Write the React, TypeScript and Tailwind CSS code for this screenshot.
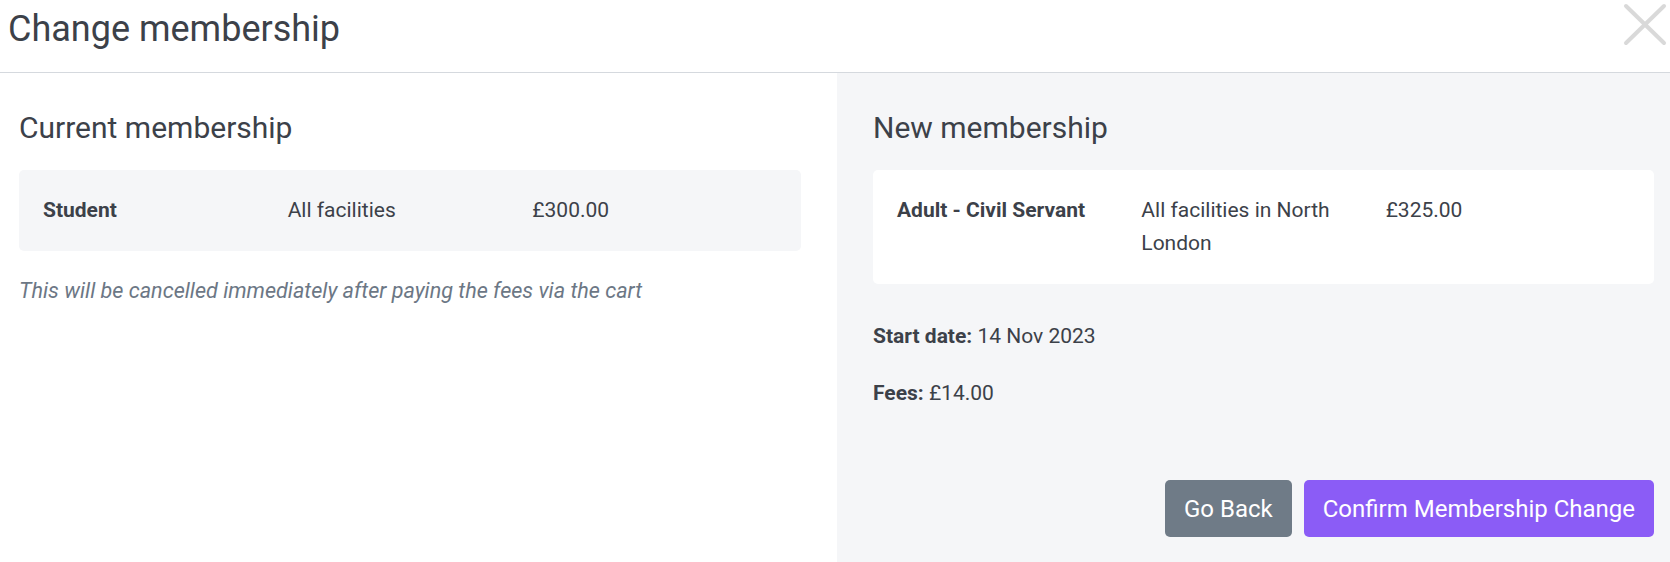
export default function App() {
  return (
    <div className="w-[1670px] h-[562px] bg-white font-['Roboto',sans-serif] text-[#3c4149] flex flex-col overflow-hidden">
      <header className="h-[73px] shrink-0 border-b border-[#d5d9de] flex justify-between">
        <h1 className="text-[36px] leading-[43px] pl-2 pt-[8px]">Change membership</h1>
        <button className="mr-[3px] mt-[3px] w-[44px] h-[43px]" aria-label="Close">
          <svg viewBox="0 0 44 43" className="w-[44px] h-[43px]" fill="none" stroke="#d9d9d9" strokeWidth="4" strokeLinecap="round">
            <path d="M3 3L41 40" />
            <path d="M41 3L3 40" />
          </svg>
        </button>
      </header>

      <div className="flex flex-1">
        {/* current */}
        <section className="w-[837px] shrink-0 pl-[19px] pr-[36px]">
          <h2 className="text-[30px] leading-[36px] mt-[37px] mb-[24px]">Current membership</h2>
          <div className="rounded-[5px] bg-[#f5f6f8] p-6 grid grid-cols-3 text-[21px] leading-[33px]">
            <div className="font-bold">Student</div>
            <div>All facilities</div>
            <div>£300.00</div>
          </div>
          <p className="mt-[23px] text-[21.6px] leading-[33px] italic text-[#6c7785]">
            This will be cancelled immediately after paying the fees via the cart
          </p>
        </section>

        {/* new */}
        <section className="flex-1 bg-[#f5f6f8] pl-[36px] pr-[16px] pb-[25px] flex flex-col">
          <h2 className="text-[30px] leading-[36px] mt-[37px] mb-[24px]">New membership</h2>
          <div className="rounded-[5px] bg-white p-6 grid grid-cols-3 text-[21px] leading-[33px]">
            <div className="font-bold">Adult - Civil Servant</div>
            <div>All facilities in North London</div>
            <div>£325.00</div>
          </div>
          <p className="mt-[36px] text-[21px] leading-[33px]">
            <span className="font-bold">Start date:</span> 14 Nov 2023
          </p>
          <p className="mt-[24px] text-[21px] leading-[33px]">
            <span className="font-bold">Fees:</span> £14.00
          </p>
          <div className="mt-auto flex justify-end gap-3">
            <button className="h-[57px] px-[19px] rounded-[5px] bg-[#6f7b87] text-white text-[24px]">Go Back</button>
            <button className="h-[57px] px-[19px] rounded-[5px] bg-[#8b5cf6] text-white text-[24px]">Confirm Membership Change</button>
          </div>
        </section>
      </div>
    </div>
  )
}
